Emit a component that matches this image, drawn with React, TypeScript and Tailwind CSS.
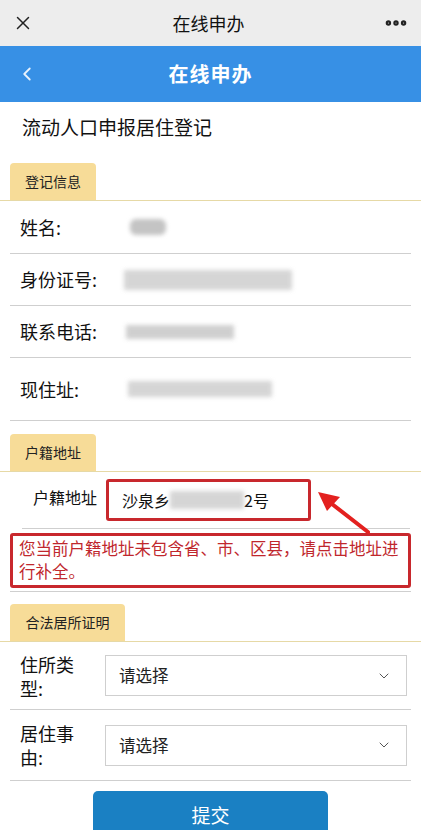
import { X, MoreHorizontal, ChevronLeft, ChevronDown } from 'lucide-react';

const font = { fontFamily: '"Noto Sans CJK SC", "Noto Sans", sans-serif' };

function SectionTab({ label, width }: { label: string; width: string }) {
  return (
    <div className="px-[10px] border-b border-[#e6d9a6]">
      <div className={`${width} h-[37px] bg-[#f7dc98] rounded-t-[4px] flex items-center justify-center text-[14px] text-[#222]`}>
        {label}
      </div>
    </div>
  );
}

function Blur({ className }: { className: string }) {
  return <div className={`bg-[#c4c4c4] blur-[2px] ${className}`} />;
}

function InfoRow({ label, h, children }: { label: string; h: string; children: React.ReactNode }) {
  return (
    <div className={`mx-[10px] ${h} border-b border-[#cfcfcf] flex items-center`}>
      <span className="w-[102px] pl-[10px] text-[18px] text-[#111] shrink-0">{label}</span>
      {children}
    </div>
  );
}

function SelectRow({ l1, l2, h }: { l1: string; l2: string; h: string }) {
  return (
    <div className={`mx-[10px] ${h} border-b border-[#cfcfcf] flex items-center`}>
      <div className="w-[95px] pl-[10px] text-[18px] leading-[24px] text-[#111] shrink-0">
        <div>{l1}</div>
        <div>{l2}</div>
      </div>
      <div className="flex-1 mr-[4px] h-[41px] border border-[#cfcfcf] flex items-center justify-between pl-[13px] pr-[14px]">
        <span className="text-[16.5px] text-[#222]">请选择</span>
        <ChevronDown className="w-[16px] h-[16px] text-[#555]" strokeWidth={1.5} />
      </div>
    </div>
  );
}

export default function App() {
  return (
    <div className="w-[421px] h-[830px] overflow-hidden bg-white" style={font}>
      {/* WeChat top bar */}
      <div className="h-[46px] bg-[#ededed] flex items-center justify-between px-[12px]">
        <X className="w-[22px] h-[22px] text-[#222]" strokeWidth={1.6} />
        <span className="text-[18px] text-[#111]">在线申办</span>
        <MoreHorizontal className="w-[26px] h-[26px] text-[#222]" strokeWidth={3} />
      </div>

      {/* blue header */}
      <div className="h-[56px] bg-[#3790e5] flex items-center relative">
        <ChevronLeft className="absolute left-[16px] w-[22px] h-[22px] text-[#e8f2fc]" strokeWidth={2} />
        <span className="w-full text-center text-[20px] font-bold text-white tracking-[1px]">在线申办</span>
      </div>

      <div className="h-[50px] flex items-center pl-[22px] text-[19px] text-[#111]">流动人口申报居住登记</div>

      <div className="pt-[11px]">
        <SectionTab label="登记信息" width="w-[86px]" />
      </div>

      <InfoRow label="姓名:" h="h-[53px]">
        <Blur className="w-[36px] h-[16px] rounded-[6px] ml-[18px]" />
      </InfoRow>
      <InfoRow label="身份证号:" h="h-[52px]">
        <Blur className="w-[168px] h-[20px] ml-[12px] opacity-70" />
      </InfoRow>
      <InfoRow label="联系电话:" h="h-[52px]">
        <Blur className="w-[108px] h-[14px] ml-[14px] opacity-80" />
      </InfoRow>
      <InfoRow label="现住址:" h="h-[63px]">
        <Blur className="w-[144px] h-[16px] ml-[16px] opacity-70" />
      </InfoRow>

      <div className="pt-[13px]">
        <SectionTab label="户籍地址" width="w-[86px]" />
      </div>

      <div className="relative">
        <div className="ml-[22px] mr-[11px] h-[57px] border-b border-[#cfcfcf] flex items-center">
          <span className="w-[84px] pl-[11px] text-[16px] text-[#111] shrink-0 whitespace-nowrap -mt-[6px]">户籍地址</span>
          <div className="w-[205px] h-[42px] border-[3px] border-[#c8282d] rounded-[3px] flex items-center pl-[13px]">
            <span className="text-[16px] text-[#111]">沙泉乡</span>
            <Blur className="w-[74px] h-[18px] opacity-70" />
            <span className="text-[16px] text-[#111]">2号</span>
          </div>
        </div>

        <div className="mx-[10px] mt-[4px] border-[3px] border-[#c8282d] rounded-[3px] px-[6px] pt-[1px] pb-[2px] text-[16.5px] leading-[23px] text-[#c0272d]">
          您当前户籍地址未包含省、市、区县，请点击地址进行补全。
        </div>
        <div className="mx-[10px] mt-[3px] border-b border-[#cfcfcf]" />

        <svg className="absolute left-[310px] top-[8px]" width="70" height="60" viewBox="0 0 70 60">
          <path d="M58 52 L22 24" stroke="#e3211f" strokeWidth="4" strokeLinecap="round" />
          <path d="M8 12 L30 17 L17 31 Z" fill="#e3211f" />
        </svg>
      </div>

      <div className="pt-[12px]">
        <SectionTab label="合法居所证明" width="w-[115px]" />
      </div>

      <SelectRow l1="住所类" l2="型:" h="h-[68px]" />
      <SelectRow l1="居住事" l2="由:" h="h-[71px]" />

      <div className="flex justify-center pt-[10px]">
        <div className="w-[235px] h-[48px] bg-[#1a80c3] rounded-[5px] flex items-center justify-center text-[19px] text-white">
          提交
        </div>
      </div>
    </div>
  );
}
